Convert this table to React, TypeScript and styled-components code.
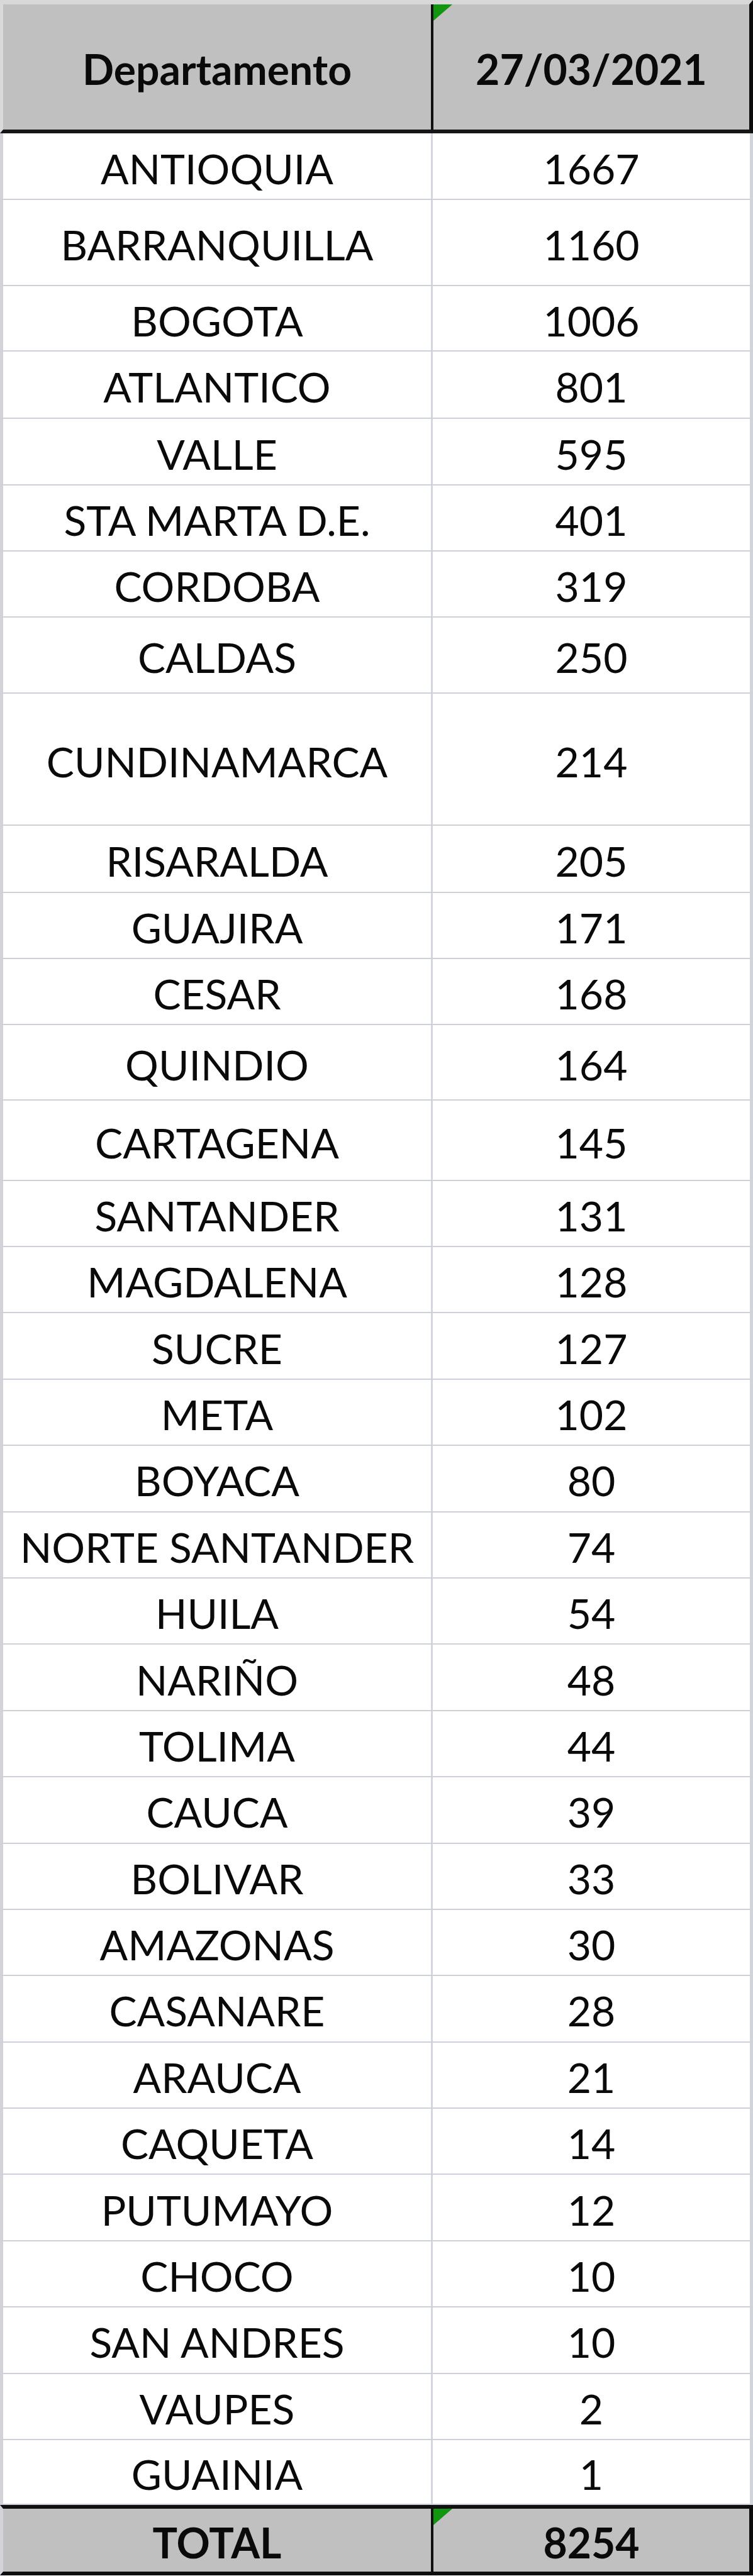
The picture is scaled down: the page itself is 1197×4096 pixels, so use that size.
import styled, { createGlobalStyle } from "styled-components";

const GlobalStyle = createGlobalStyle`
  html, body {
    margin: 0;
    padding: 0;
    background: #ffffff;
  }
  * {
    box-sizing: border-box;
  }
`;

type Kind = "head" | "body" | "total";

interface IRow {
  name: string;
  value: string;
  h: number;
}

const STD = 105.4;

const rows: IRow[] = [
  { name: "ANTIOQUIA", value: "1667", h: 106 },
  { name: "BARRANQUILLA", value: "1160", h: 137 },
  { name: "BOGOTA", value: "1006", h: 104 },
  { name: "ATLANTICO", value: "801", h: 107 },
  { name: "VALLE", value: "595", h: 106 },
  { name: "STA MARTA D.E.", value: "401", h: 105 },
  { name: "CORDOBA", value: "319", h: 105 },
  { name: "CALDAS", value: "250", h: 121 },
  { name: "CUNDINAMARCA", value: "214", h: 210 },
  { name: "RISARALDA", value: "205", h: 107 },
  { name: "GUAJIRA", value: "171", h: 105 },
  { name: "CESAR", value: "168", h: 105 },
  { name: "QUINDIO", value: "164", h: 120 },
  { name: "CARTAGENA", value: "145", h: 128 },
  { name: "SANTANDER", value: "131", h: 105 },
  { name: "MAGDALENA", value: "128", h: STD },
  { name: "SUCRE", value: "127", h: STD },
  { name: "META", value: "102", h: STD },
  { name: "BOYACA", value: "80", h: STD },
  { name: "NORTE SANTANDER", value: "74", h: STD },
  { name: "HUILA", value: "54", h: STD },
  { name: "NARIÑO", value: "48", h: STD },
  { name: "TOLIMA", value: "44", h: STD },
  { name: "CAUCA", value: "39", h: STD },
  { name: "BOLIVAR", value: "33", h: STD },
  { name: "AMAZONAS", value: "30", h: STD },
  { name: "CASANARE", value: "28", h: STD },
  { name: "ARAUCA", value: "21", h: STD },
  { name: "CAQUETA", value: "14", h: STD },
  { name: "PUTUMAYO", value: "12", h: STD },
  { name: "CHOCO", value: "10", h: STD },
  { name: "SAN ANDRES", value: "10", h: STD },
  { name: "VAUPES", value: "2", h: STD },
  { name: "GUAINIA", value: "1", h: STD },
];

const Sheet = styled.div`
  width: 1197px;
  display: flex;
  flex-direction: column;
  font-family: Lato, "Open Sans", sans-serif;
  color: #0a0a0a;
`;

const Row = styled.div<{ $kind: Kind; $h: number }>`
  display: grid;
  grid-template-columns: 680px 1fr;
  height: ${(p) => p.$h}px;
  background: ${(p) => (p.$kind === "body" ? "#ffffff" : "#c0c0c0")};
  border-left: 5px solid ${(p) => (p.$kind === "head" ? "#d9d9d9" : "#d3d4d9")};
  border-right: ${(p) =>
    p.$kind === "body" ? "5px solid #d2d4db" : "6px solid #0d0d0d"};
  border-top: ${(p) =>
    p.$kind === "head"
      ? "7px solid #d8d8d8"
      : p.$kind === "total"
      ? "6px solid #111111"
      : "none"};
  border-bottom: ${(p) =>
    p.$kind === "head"
      ? "6px solid #161616"
      : p.$kind === "total"
      ? "6px solid #0d0d0d"
      : "2px solid #cdd0d8"};
  font-size: 66px;
  font-weight: ${(p) => (p.$kind === "body" ? 400 : 700)};
`;

const Cell = styled.div<{ $kind: Kind; $divider?: boolean }>`
  position: relative;
  display: flex;
  align-items: center;
  justify-content: center;
  padding-top: 6px;
  white-space: nowrap;
  border-left: ${(p) =>
    !p.$divider
      ? "none"
      : p.$kind === "body"
      ? "3px solid #d4d6dd"
      : "4px solid #111111"};
`;

const Flag = styled.span`
  position: absolute;
  top: 0;
  left: 0;
  width: 0;
  height: 0;
  border-top: 26px solid #12960f;
  border-right: 30px solid transparent;
`;

function SheetRow({
  kind,
  h,
  name,
  value,
  flag,
}: {
  kind: Kind;
  h: number;
  name: string;
  value: string;
  flag?: boolean;
}) {
  return (
    <Row $kind={kind} $h={h}>
      <Cell $kind={kind}>{name}</Cell>
      <Cell $kind={kind} $divider>
        {flag && <Flag />}
        {value}
      </Cell>
    </Row>
  );
}

export default function App() {
  return (
    <>
      <GlobalStyle />
      <Sheet>
        <SheetRow kind="head" h={212} name="Departamento" value="27/03/2021" flag />
        {rows.map((r, i) => (
          <SheetRow
            key={r.name + i}
            kind="body"
            h={i === rows.length - 1 ? STD - 2 : r.h}
            name={r.name}
            value={r.value}
          />
        ))}
        <SheetRow kind="total" h={112} name="TOTAL" value="8254" flag />
      </Sheet>
    </>
  );
}
